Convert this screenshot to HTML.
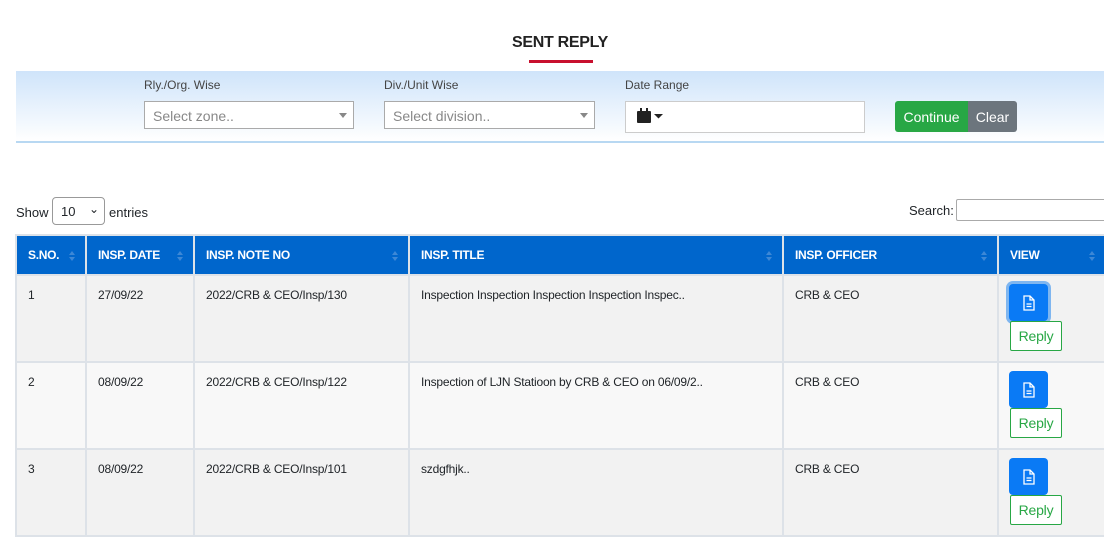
<!DOCTYPE html>
<html><head><style>
*{box-sizing:border-box;margin:0;padding:0}
body{width:1104px;height:541px;overflow:hidden;background:#fff;font-family:"Liberation Sans",sans-serif;color:#212529;position:relative}
.abs{position:absolute}
.title{left:0;width:1120px;top:34px;text-align:center;font-size:16px;font-weight:bold;color:#222;letter-spacing:-0.3px}
.uline{left:529px;top:60px;width:64px;height:3px;background:#c8102e}
.band{left:16px;top:71px;width:1088px;height:72px;background:linear-gradient(#cfe4fa,#fff);border-bottom:2px solid #b8d8f2}
.lbl{font-size:12px;color:#444;top:78px}
.sel{top:101px;height:28px;border:1px solid #aaa;background:#fff;font-size:14px;color:#888;padding:6px 8px}
.sel:after{content:"";position:absolute;right:6px;top:11px;border:4px solid transparent;border-top:5px solid #888}
.btn{top:101px;height:31px;font-size:14px;color:#fff;padding:8px 0;text-align:center}
table{position:absolute;left:15px;top:234px;border-collapse:collapse;font-size:12px;table-layout:fixed;width:1090px}
th{background:#0066cc;color:#fff;text-align:left;height:40px;padding:0 11px;font-size:12px;border:2px solid #dde2e8;position:relative;letter-spacing:-0.3px}
th:after{content:"";position:absolute;right:10px;top:12px;border:3px solid transparent;border-bottom:4px solid #3d88d6}
th:before{content:"";position:absolute;right:10px;top:21px;border:3px solid transparent;border-top:4px solid #3d88d6}
td{height:87px;vertical-align:top;padding:12px 11px 0;border:2px solid #dde2e8;background:#f2f2f2;letter-spacing:-0.2px}
tr.e td{background:#f8f8f8}
.vb{width:39px;height:37px;background:#0a7af5;border-radius:4px;display:flex;align-items:center;justify-content:center;margin:-4px 0 0 -1px}
.rb{width:52px;height:30px;border:1px solid #28a745;color:#28a745;font-size:14px;text-align:center;line-height:28px;border-radius:2px;margin-left:0;background:#fff}
</style></head><body>
<div class="abs title">SENT REPLY</div>
<div class="abs uline"></div>
<div class="abs band"></div>
<div class="abs lbl" style="left:144px">Rly./Org. Wise</div>
<div class="abs lbl" style="left:384px">Div./Unit Wise</div>
<div class="abs lbl" style="left:625px">Date Range</div>
<div class="abs sel" style="left:144px;width:210px">Select zone..</div>
<div class="abs sel" style="left:384px;width:211px">Select division..</div>
<div class="abs" style="left:625px;top:101px;width:240px;height:32px;border:1px solid #ccc;background:#fff">
<svg style="position:absolute;left:10px;top:5px" width="30" height="18" viewBox="0 0 30 18"><rect x="1" y="4" width="14" height="12" rx="1" fill="#222"/><rect x="4" y="1" width="2" height="4" fill="#222"/><rect x="10" y="1" width="2" height="4" fill="#222"/><path d="M18 7h9l-4.5 4.5z" fill="#222"/></svg></div>
<div class="abs btn" style="left:895px;width:73px;background:#28a745;border-radius:3px 0 0 3px">Continue</div>
<div class="abs btn" style="left:968px;width:49px;background:#6c757d;border-radius:0 3px 3px 0">Clear</div>
<div class="abs" style="left:16px;top:205px;font-size:13px">Show</div>
<div class="abs" style="left:52px;top:197px;width:53px;height:28px;border:1px solid #999;border-radius:4px;font-size:13px;padding:6px 8px">10<span style="position:absolute;right:5px;top:4px;font-size:12px">&#x2304;</span></div>
<div class="abs" style="left:109px;top:205px;font-size:13px">entries</div>
<div class="abs" style="left:909px;top:203px;font-size:13px">Search:</div>
<div class="abs" style="left:956px;top:199px;width:150px;height:22px;border:1px solid #aaa;border-radius:2px"></div>
<table>
<colgroup><col style="width:70px"><col style="width:108px"><col style="width:215px"><col style="width:374px"><col style="width:215px"><col style="width:108px"></colgroup>
<tr><th>S.NO.</th><th>INSP. DATE</th><th>INSP. NOTE NO</th><th>INSP. TITLE</th><th>INSP. OFFICER</th><th>VIEW</th></tr>
<tr><td>1</td><td>27/09/22</td><td>2022/CRB &amp; CEO/Insp/130</td><td>Inspection Inspection Inspection Inspection Inspec..</td><td>CRB &amp; CEO</td><td><div class="vb" style="box-shadow:0 0 0 3px #7fb6f0"><svg width="12" height="16" viewBox="0 0 12 16"><path d="M1 1h6l4 4v10H1z M7 1v4h4 M3.5 9h5 M3.5 11.5h5" fill="none" stroke="#fff" stroke-width="1.3"/></svg></div><div class="rb">Reply</div></td></tr>
<tr class="e"><td>2</td><td>08/09/22</td><td>2022/CRB &amp; CEO/Insp/122</td><td>Inspection of LJN Statioon by CRB &amp; CEO on 06/09/2..</td><td>CRB &amp; CEO</td><td><div class="vb"><svg width="12" height="16" viewBox="0 0 12 16"><path d="M1 1h6l4 4v10H1z M7 1v4h4 M3.5 9h5 M3.5 11.5h5" fill="none" stroke="#fff" stroke-width="1.3"/></svg></div><div class="rb">Reply</div></td></tr>
<tr><td>3</td><td>08/09/22</td><td>2022/CRB &amp; CEO/Insp/101</td><td>szdgfhjk..</td><td>CRB &amp; CEO</td><td><div class="vb"><svg width="12" height="16" viewBox="0 0 12 16"><path d="M1 1h6l4 4v10H1z M7 1v4h4 M3.5 9h5 M3.5 11.5h5" fill="none" stroke="#fff" stroke-width="1.3"/></svg></div><div class="rb">Reply</div></td></tr>
</table>
</body></html>
